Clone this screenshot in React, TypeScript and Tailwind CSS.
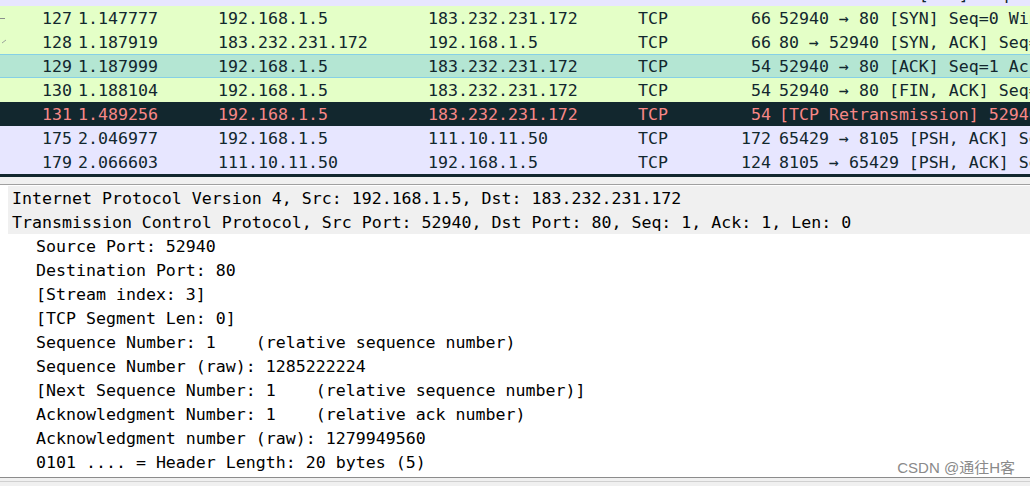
import React from "react";

type Row = {
  no: string;
  time: string;
  src: string;
  dst: string;
  proto: string;
  len: string;
  info: string;
  kind: "lav" | "green" | "teal" | "bad";
  mark?: "line" | "tick";
};

const rows: Row[] = [
  { no: "126", time: "1.147731", src: "183.232.231.172", dst: "192.168.1.5", proto: "TCP", len: "54", info: "48213 → 65429 [ACK] Seq=1 Ack=1 Win=2048 Len=0", kind: "lav" },
  { no: "127", time: "1.147777", src: "192.168.1.5", dst: "183.232.231.172", proto: "TCP", len: "66", info: "52940 → 80 [SYN] Seq=0 Win=64240 Len=0 MSS=1460", kind: "green", mark: "line" },
  { no: "128", time: "1.187919", src: "183.232.231.172", dst: "192.168.1.5", proto: "TCP", len: "66", info: "80 → 52940 [SYN, ACK] Seq=0 Ack=1 Win=8192", kind: "green", mark: "tick" },
  { no: "129", time: "1.187999", src: "192.168.1.5", dst: "183.232.231.172", proto: "TCP", len: "54", info: "52940 → 80 [ACK] Seq=1 Ack=1 Win=131328", kind: "teal" },
  { no: "130", time: "1.188104", src: "192.168.1.5", dst: "183.232.231.172", proto: "TCP", len: "54", info: "52940 → 80 [FIN, ACK] Seq=1 Ack=1 Win=131328", kind: "green" },
  { no: "131", time: "1.489256", src: "192.168.1.5", dst: "183.232.231.172", proto: "TCP", len: "54", info: "[TCP Retransmission] 52940 → 80 [FIN, ACK]", kind: "bad" },
  { no: "175", time: "2.046977", src: "192.168.1.5", dst: "111.10.11.50", proto: "TCP", len: "172", info: "65429 → 8105 [PSH, ACK] Seq=1 Ack=1 Win=512", kind: "lav" },
  { no: "179", time: "2.066603", src: "111.10.11.50", dst: "192.168.1.5", proto: "TCP", len: "124", info: "8105 → 65429 [PSH, ACK] Seq=1 Ack=119 Win=1026", kind: "lav" },
  { no: "180", time: "2.097313", src: "192.168.1.5", dst: "183.232.231.172", proto: "TCP", len: "54", info: "[TCP Retransmission] 52940 → 80 [FIN, ACK]", kind: "bad" },
];

const rowBg: Record<Row["kind"], string> = {
  lav: "bg-[#e7e6ff] text-[#12272e]",
  green: "bg-[#e4ffc7] text-[#12272e]",
  teal: "bg-[#b4e6d3] text-[#12272e] shadow-[inset_0_1px_0_#86d0e6,inset_0_-1px_0_#86d0e6]",
  bad: "bg-[#12272e] text-[#f78787]",
};

function Marker({ m }: { m?: Row["mark"] }) {
  if (!m) return null;
  return (
    <svg className="absolute left-0 top-0" width="10" height="24" viewBox="0 0 10 24">
      {m === "line" ? (
        <line x1="0" y1="12.5" x2="5" y2="12.5" stroke="#8a8f8c" strokeWidth="1" />
      ) : (
        <line x1="2" y1="13" x2="6" y2="10" stroke="#9aa39c" strokeWidth="1" />
      )}
    </svg>
  );
}

const details: { text: string; indent: boolean; hl?: boolean }[] = [
  { text: "Internet Protocol Version 4, Src: 192.168.1.5, Dst: 183.232.231.172", indent: false, hl: true },
  { text: "Transmission Control Protocol, Src Port: 52940, Dst Port: 80, Seq: 1, Ack: 1, Len: 0", indent: false, hl: true },
  { text: "Source Port: 52940", indent: true },
  { text: "Destination Port: 80", indent: true },
  { text: "[Stream index: 3]", indent: true },
  { text: "[TCP Segment Len: 0]", indent: true },
  { text: "Sequence Number: 1    (relative sequence number)", indent: true },
  { text: "Sequence Number (raw): 1285222224", indent: true },
  { text: "[Next Sequence Number: 1    (relative sequence number)]", indent: true },
  { text: "Acknowledgment Number: 1    (relative ack number)", indent: true },
  { text: "Acknowledgment number (raw): 1279949560", indent: true },
  { text: "0101 .... = Header Length: 20 bytes (5)", indent: true },
];

export default function App() {
  return (
    <div
      className="relative w-[1030px] h-[486px] overflow-hidden bg-white text-[16.6px] leading-[22px] whitespace-pre"
      style={{ fontFamily: '"DejaVu Sans Mono", "Liberation Mono", monospace' }}
    >
      {/* packet list */}
      <div className="h-[177px] overflow-hidden">
        <div className="-mt-[18px] flex flex-col">
          {rows.map((r) => (
            <div
              key={r.no}
              className={`relative h-6 grid grid-cols-[75px_140px_210px_210px_139px_1fr] ${rowBg[r.kind]}`}
            >
              <Marker m={r.mark} />
              <div className="text-right pr-[3px] pt-[2px]">{r.no}</div>
              <div className="pl-[3px] pt-[2px]">{r.time}</div>
              <div className="pl-[3px] pt-[2px]">{r.src}</div>
              <div className="pl-[3px] pt-[2px]">{r.dst}</div>
              <div className="grid grid-cols-[60px_1fr]">
                <div className="pl-[3px] pt-[2px]">{r.proto}</div>
                <div className="text-right pr-[3px] pt-[2px]">{r.len}</div>
              </div>
              <div className="pl-[5px] pt-[2px] overflow-hidden">{r.info}</div>
            </div>
          ))}
        </div>
      </div>

      {/* splitter */}
      <div className="h-[8px] bg-[#f0f0f0] border-b border-[#a0a0a0]" />

      {/* details */}
      <div className="h-[292px] overflow-hidden pt-px text-black">
        {details.map((d, i) => (
          <div key={i} className={`h-6 pt-[2px] ${d.hl ? "ml-[8px] bg-[#f0f0f0] pl-[4px]" : d.indent ? "pl-[36px]" : "pl-[12px]"}`}>
            {d.text}
          </div>
        ))}
      </div>

      {/* bottom strip */}
      <div className="h-[9px] bg-[#f0f0f0] border-t border-[#8c8c8c] flex flex-col">
        <div className="h-[3px]" />
        <div className="border-t border-[#d0d0d0]" />
      </div>

      <div
        className="absolute right-[15px] bottom-[9px] text-[15px] leading-[18px] text-[#8a8a8a]"
        style={{ fontFamily: '"Liberation Sans", "Noto Sans CJK SC", sans-serif' }}
      >
        CSDN @通往H客
      </div>
    </div>
  );
}
